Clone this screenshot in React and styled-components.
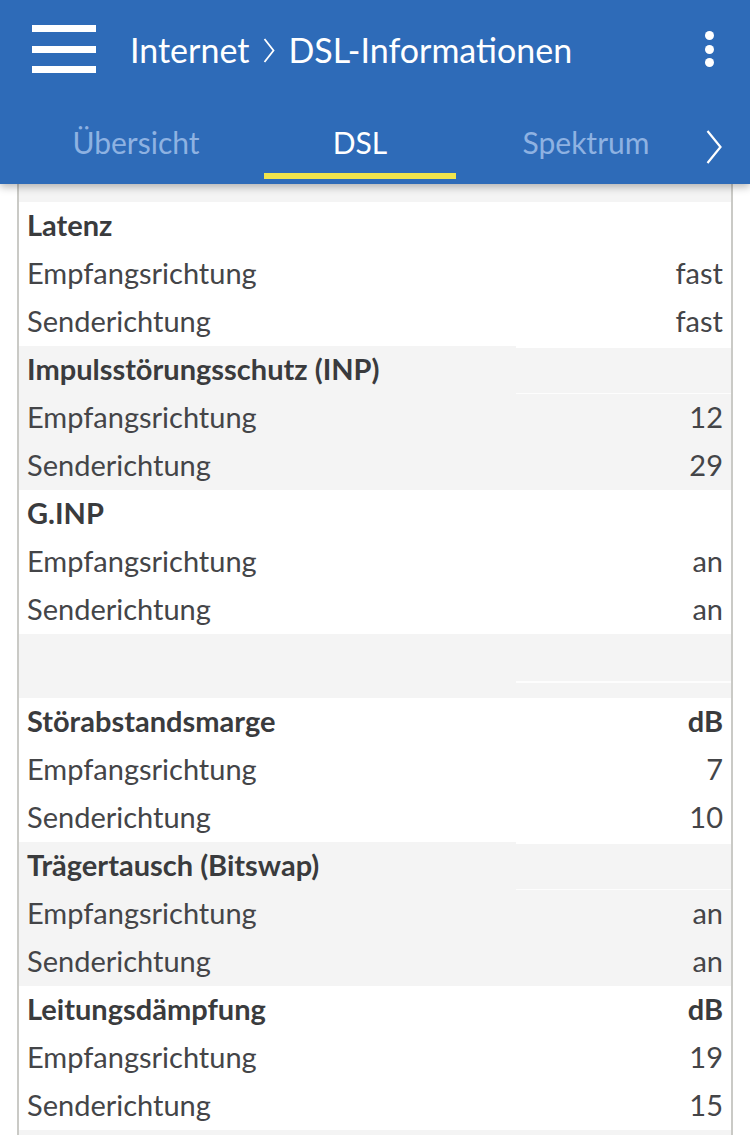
import React from "react";
import styled, { createGlobalStyle } from "styled-components";

const GlobalStyle = createGlobalStyle`
  html, body {
    margin: 0;
    padding: 0;
    background: #ffffff;
  }
  body {
    font-family: "Lato", "Liberation Sans", sans-serif;
    color: #3d3e40;
  }
`;

const groups = [
  {
    title: "Latenz",
    rows: [
      ["Empfangsrichtung", "fast"],
      ["Senderichtung", "fast"],
    ],
  },
  {
    title: "Impulsstörungsschutz (INP)",
    rows: [
      ["Empfangsrichtung", "12"],
      ["Senderichtung", "29"],
    ],
  },
  {
    title: "G.INP",
    rows: [
      ["Empfangsrichtung", "an"],
      ["Senderichtung", "an"],
    ],
  },
  { spacer: true },
  {
    title: "Störabstandsmarge",
    unit: "dB",
    rows: [
      ["Empfangsrichtung", "7"],
      ["Senderichtung", "10"],
    ],
  },
  {
    title: "Trägertausch (Bitswap)",
    rows: [
      ["Empfangsrichtung", "an"],
      ["Senderichtung", "an"],
    ],
  },
  {
    title: "Leitungsdämpfung",
    unit: "dB",
    rows: [
      ["Empfangsrichtung", "19"],
      ["Senderichtung", "15"],
    ],
  },
];

const Chevron = ({ w, h, stroke }) => (
  <svg width={w} height={h} viewBox={`0 0 ${w} ${h}`}>
    <path
      d={`M1.5 1 L${w - 1.5} ${h / 2} L1.5 ${h - 1}`}
      fill="none"
      stroke="#ffffff"
      strokeWidth={stroke}
    />
  </svg>
);

const App = () => {
  return (
    <>
      <GlobalStyle />
      <Page>
        <Header>
          <TopBar>
            <Burger>
              <span />
              <span />
              <span />
            </Burger>
            <Title>
              Internet
              <Crumb>
                <Chevron w={12} h={25} stroke={1.8} />
              </Crumb>
              DSL-Informationen
            </Title>
            <Kebab>
              <span />
              <span />
              <span />
            </Kebab>
          </TopBar>
          <Tabs>
            <Tab>Übersicht</Tab>
            <Tab $active>DSL</Tab>
            <Tab>Spektrum</Tab>
            <TabArrow>
              <Chevron w={16} h={34} stroke={2.2} />
            </TabArrow>
          </Tabs>
        </Header>
        <Content>
          <TopGap />
          {groups.map((g, i) =>
            g.spacer ? (
              <Spacer key={i} />
            ) : (
              <Group key={i} $shaded={i % 2 === 1}>
                <Row>
                  <Label $bold>{g.title}</Label>
                  <Value $bold $head $shaded={i % 2 === 1}>{g.unit || ""}</Value>
                </Row>
                {g.rows.map(([label, value]) => (
                  <Row key={label}>
                    <Label>{label}</Label>
                    <Value>{value}</Value>
                  </Row>
                ))}
              </Group>
            )
          )}
          <BottomGap />
        </Content>
      </Page>
    </>
  );
};

export default App;

const Page = styled.div`
  width: 750px;
  height: 1135px;
  overflow: hidden;
  background: #ffffff;
`;

const Header = styled.header`
  position: relative;
  z-index: 2;
  background: #2e6bb8;
  height: 184px;
  box-shadow: 0 3px 8px rgba(0, 0, 0, 0.28);
`;

const TopBar = styled.div`
  height: 100px;
  display: flex;
  align-items: center;
  padding: 0 32px;
`;

const Burger = styled.div`
  width: 64px;
  height: 48px;
  display: flex;
  flex-direction: column;
  justify-content: space-between;
  margin-top: -2px;
  span {
    display: block;
    height: 7px;
    background: #ffffff;
  }
`;

const Title = styled.div`
  flex: 1;
  display: flex;
  align-items: center;
  margin-left: 34px;
  color: #ffffff;
  font-size: 34px;
  margin-top: -2px;
`;

const Crumb = styled.span`
  display: inline-flex;
  margin: 3px 13px 0 14px;
`;

const Kebab = styled.div`
  display: flex;
  flex-direction: column;
  gap: 4.5px;
  margin-right: 4px;
  margin-top: -2px;
  span {
    width: 9px;
    height: 9px;
    border-radius: 50%;
    background: #ffffff;
  }
`;

const Tabs = styled.div`
  height: 84px;
  display: grid;
  grid-template-columns: 45px 182px 37px 192px 40px 180px 1fr;
  & > :nth-child(1) { grid-column: 2; }
  & > :nth-child(2) { grid-column: 4; }
  & > :nth-child(3) { grid-column: 6; }
  & > :nth-child(4) { grid-column: 7; }
`;

const Tab = styled.div`
  display: flex;
  justify-content: center;
  align-items: center;
  height: 78px;
  padding-top: 10px;
  margin-top: 1px;
  box-sizing: border-box;
  font-size: 30px;
  color: ${(p) => (p.$active ? "#ffffff" : "#8eb2e2")};
  border-bottom: 6px solid ${(p) => (p.$active ? "#f0e44c" : "transparent")};
`;

const TabArrow = styled.div`
  display: flex;
  align-items: flex-start;
  padding-left: 30px;
  padding-top: 30px;
`;

const Content = styled.div`
  margin: 0 17px;
  border-left: 2px solid #cacac6;
  border-right: 2px solid #cacac6;
`;

const TopGap = styled.div`
  height: 18px;
  background: #f4f4f4;
`;

const Group = styled.div`
  background: ${(p) => (p.$shaded ? "#f4f4f4" : "#ffffff")};
`;

const Row = styled.div`
  height: 48px;
  display: flex;
  align-items: center;
  justify-content: space-between;
`;

const Label = styled.div`
  padding-left: 8px;
  margin-top: -3px;
  font-size: 29px;
  font-weight: ${(p) => (p.$bold ? 700 : 400)};
  color: ${(p) => (p.$bold ? "#3a3b3d" : "#444548")};
`;

const Value = styled.div`
  align-self: stretch;
  width: 215px;
  display: flex;
  align-items: center;
  justify-content: flex-end;
  padding-right: 8px;
  padding-bottom: 3px;
  box-sizing: border-box;
  font-size: 29px;
  font-weight: ${(p) => (p.$bold ? 700 : 400)};
  color: ${(p) => (p.$bold ? "#3a3b3d" : "#444548")};
  box-shadow: ${(p) =>
    p.$head && p.$shaded ? "inset 0 2px #ffffff, inset 0 -1px #fdfdfd" : "none"};
`;

const Spacer = styled.div`
  height: 64px;
  background: #f4f4f4;
  position: relative;
  &::after {
    content: "";
    position: absolute;
    right: 0;
    top: 47px;
    width: 215px;
    height: 2px;
    background: #fdfdfd;
  }
`;

const BottomGap = styled.div`
  height: 20px;
  background: #f4f4f4;
`;
